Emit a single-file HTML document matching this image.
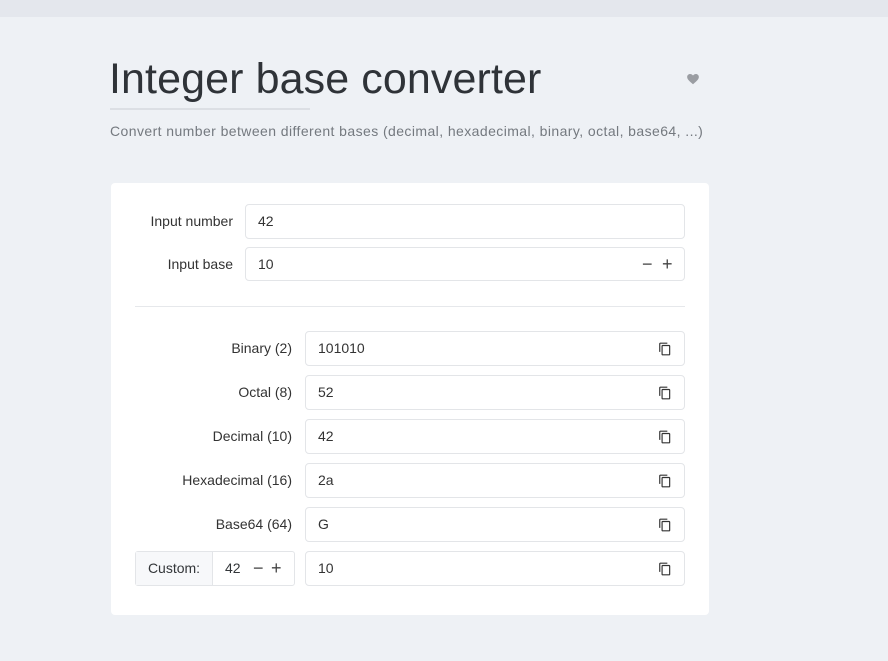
<!DOCTYPE html>
<html><head><style>
*{box-sizing:border-box;margin:0;padding:0}
body{width:888px;height:661px;background:#eef1f5;font-family:"Liberation Sans",sans-serif;position:relative;overflow:hidden;color:#333639}
.top{position:absolute;left:0;top:0;width:888px;height:17px;background:#e4e7ed}
h1{position:absolute;left:109px;top:55px;font-size:43px;font-weight:400;color:#2f3338;letter-spacing:0.1px}
.ul{position:absolute;left:110px;top:108px;width:200px;height:2px;background:#dcdfe4}
.sub{position:absolute;left:110px;top:123px;font-size:14px;color:#74797f;letter-spacing:0.42px}
.heart{position:absolute;left:686px;top:72px;width:14px;height:14px}
.card{position:absolute;left:111px;top:183px;width:598px;height:432px;background:#fff;border-radius:4px}
.inp{position:absolute;height:35px;border:1px solid #e3e5e8;border-radius:4px;background:#fff;font-size:14px;line-height:33px;padding-left:12px;color:#333}
.lbl{position:absolute;font-size:14px;color:#333;text-align:right;line-height:35px}
.pm{position:absolute;font-size:18px;color:#444;line-height:33px}
.cp{position:absolute;right:12px;top:10px;width:14px;height:14px}
.div{position:absolute;left:135px;top:306px;width:550px;height:1px;background:#e6e8eb}
</style></head><body>
<div class="top"></div>
<h1>Integer base converter</h1>
<div class="ul"></div>
<div class="sub">Convert number between different bases (decimal, hexadecimal, binary, octal, base64, ...)</div>
<svg class="heart" viewBox="0 0 24 24"><path d="M12 21l-1.5-1.3C5 15 2 12 2 8.5 2 5.6 4.3 3.5 7 3.5c1.9 0 3.7 1 5 2.5 1.3-1.5 3.1-2.5 5-2.5 2.7 0 5 2.1 5 5 0 3.5-3 6.5-8.5 11.2z" fill="#9a9da2"/></svg>
<div class="card"></div>
<div class="lbl" style="left:120px;width:113px;top:204px">Input number</div>
<div class="inp" style="left:245px;top:204px;width:440px">42</div>
<div class="lbl" style="left:120px;width:113px;top:247px">Input base</div>
<div class="inp" style="left:245px;top:247px;width:440px;height:34px">10<span class="pm" style="left:396px;top:0">−</span><span class="pm" style="left:416px;top:0">+</span></div>
<div class="div"></div>
<div class="lbl" style="left:140px;width:152px;top:331px">Binary (2)</div>
<div class="lbl" style="left:140px;width:152px;top:375px">Octal (8)</div>
<div class="lbl" style="left:140px;width:152px;top:419px">Decimal (10)</div>
<div class="lbl" style="left:140px;width:152px;top:463px">Hexadecimal (16)</div>
<div class="lbl" style="left:140px;width:152px;top:507px">Base64 (64)</div>
<div style="position:absolute;left:135px;top:551px;width:160px;height:35px;border:1px solid #e3e5e8;border-radius:3px;background:#fff">
<div style="position:absolute;left:0;top:0;width:77px;height:33px;background:#f7f8fa;border-right:1px solid #e3e5e8;font-size:14px;line-height:33px;text-align:center">Custom:</div>
<span style="position:absolute;left:89px;font-size:14px;line-height:33px">42</span>
<span class="pm" style="left:117px">−</span><span class="pm" style="left:135px">+</span>
</div>
<div class="inp" style="left:305px;top:331px;width:380px">101010<svg class="cp" viewBox="0 0 24 24"><path d="M16 1H4c-1.1 0-2 .9-2 2v14h2V3h12V1zm3 4H8c-1.1 0-2 .9-2 2v14c0 1.1.9 2 2 2h11c1.1 0 2-.9 2-2V7c0-1.1-.9-2-2-2zm0 16H8V7h11v14z" fill="#333"/></svg></div>
<div class="inp" style="left:305px;top:375px;width:380px">52<svg class="cp" viewBox="0 0 24 24"><path d="M16 1H4c-1.1 0-2 .9-2 2v14h2V3h12V1zm3 4H8c-1.1 0-2 .9-2 2v14c0 1.1.9 2 2 2h11c1.1 0 2-.9 2-2V7c0-1.1-.9-2-2-2zm0 16H8V7h11v14z" fill="#333"/></svg></div>
<div class="inp" style="left:305px;top:419px;width:380px">42<svg class="cp" viewBox="0 0 24 24"><path d="M16 1H4c-1.1 0-2 .9-2 2v14h2V3h12V1zm3 4H8c-1.1 0-2 .9-2 2v14c0 1.1.9 2 2 2h11c1.1 0 2-.9 2-2V7c0-1.1-.9-2-2-2zm0 16H8V7h11v14z" fill="#333"/></svg></div>
<div class="inp" style="left:305px;top:463px;width:380px">2a<svg class="cp" viewBox="0 0 24 24"><path d="M16 1H4c-1.1 0-2 .9-2 2v14h2V3h12V1zm3 4H8c-1.1 0-2 .9-2 2v14c0 1.1.9 2 2 2h11c1.1 0 2-.9 2-2V7c0-1.1-.9-2-2-2zm0 16H8V7h11v14z" fill="#333"/></svg></div>
<div class="inp" style="left:305px;top:507px;width:380px">G<svg class="cp" viewBox="0 0 24 24"><path d="M16 1H4c-1.1 0-2 .9-2 2v14h2V3h12V1zm3 4H8c-1.1 0-2 .9-2 2v14c0 1.1.9 2 2 2h11c1.1 0 2-.9 2-2V7c0-1.1-.9-2-2-2zm0 16H8V7h11v14z" fill="#333"/></svg></div>
<div class="inp" style="left:305px;top:551px;width:380px">10<svg class="cp" viewBox="0 0 24 24"><path d="M16 1H4c-1.1 0-2 .9-2 2v14h2V3h12V1zm3 4H8c-1.1 0-2 .9-2 2v14c0 1.1.9 2 2 2h11c1.1 0 2-.9 2-2V7c0-1.1-.9-2-2-2zm0 16H8V7h11v14z" fill="#333"/></svg></div>
</body></html>
